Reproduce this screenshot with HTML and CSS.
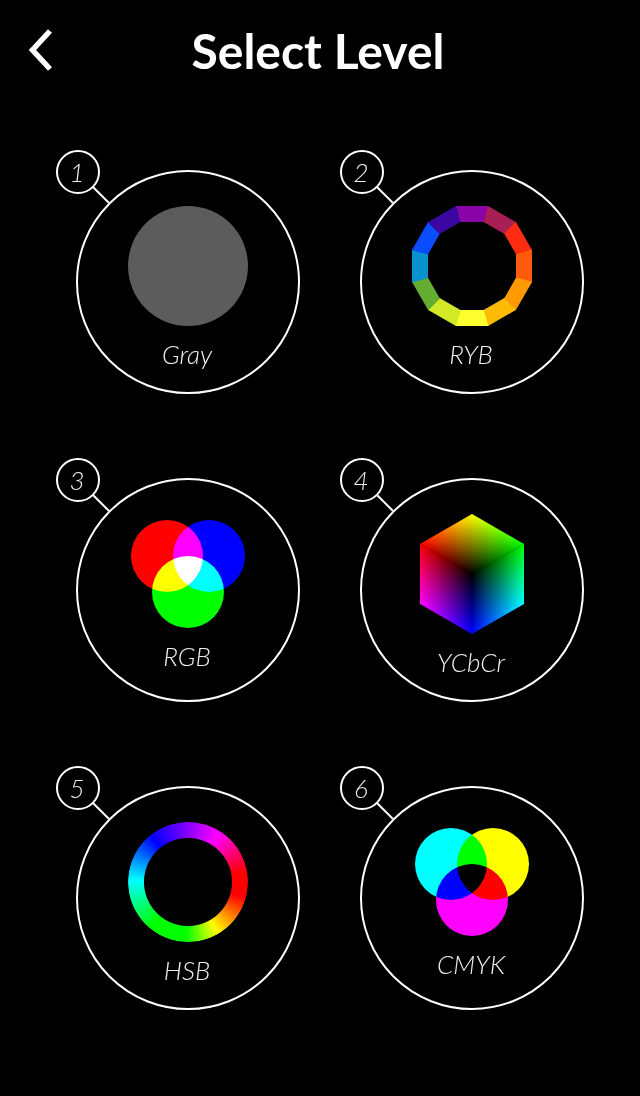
FILE: index.html
```html
<!DOCTYPE html>
<html lang="en">
<head>
<meta charset="utf-8">
<title>Select Level</title>
<link rel="stylesheet" href="styles.css">
</head>
<body>
<header class="header">
  <svg class="back" viewBox="0 0 32 44" aria-hidden="true"><polyline points="26,3 8.5,22 26,41"/></svg>
  <h1 class="title">Select Level</h1>
</header>
<main class="levels">
  <section class="level">
    <span class="badge">1</span>
    <div class="disc">
      <div class="gray-dot"></div>
      <p class="name">Gray</p>
    </div>
  </section>
  <section class="level">
    <span class="badge">2</span>
    <div class="disc">
      <svg class="icon" viewBox="-60 -60 120 120" aria-hidden="true">
        <defs><polygon id="seg" points="-16.4,-60 16.4,-60 12,-44 -12,-44"/></defs>
        <use href="#seg" fill="#8a05a8"/>
        <use href="#seg" fill="#a81f56" transform="rotate(30)"/>
        <use href="#seg" fill="#ff2c12" transform="rotate(60)"/>
        <use href="#seg" fill="#ff5a0a" transform="rotate(90)"/>
        <use href="#seg" fill="#ff9a00" transform="rotate(120)"/>
        <use href="#seg" fill="#fdbb05" transform="rotate(150)"/>
        <use href="#seg" fill="#ffff30" transform="rotate(180)"/>
        <use href="#seg" fill="#d2ea26" transform="rotate(210)"/>
        <use href="#seg" fill="#64ad33" transform="rotate(240)"/>
        <use href="#seg" fill="#0892cf" transform="rotate(270)"/>
        <use href="#seg" fill="#0a4cff" transform="rotate(300)"/>
        <use href="#seg" fill="#3c06a0" transform="rotate(330)"/>
      </svg>
      <p class="name">RYB</p>
    </div>
  </section>
  <section class="level">
    <span class="badge">3</span>
    <div class="disc">
      <svg class="icon-venn venn-add" viewBox="0 0 114 108" aria-hidden="true">
        <circle cx="36" cy="36" r="36" fill="#f00"/>
        <circle cx="78" cy="36" r="36" fill="#00f"/>
        <circle cx="57" cy="72" r="36" fill="#0f0"/>
      </svg>
      <p class="name">RGB</p>
    </div>
  </section>
  <section class="level">
    <span class="badge">4</span>
    <div class="disc">
      <svg class="icon" viewBox="-60 -60 120 120" aria-hidden="true">
        <defs>
          <linearGradient id="tr" gradientUnits="userSpaceOnUse" x1="0" y1="0" x2="-26" y2="-45"><stop offset="0" stop-color="#000"/><stop offset="1" stop-color="#f00"/></linearGradient>
          <linearGradient id="tg" gradientUnits="userSpaceOnUse" x1="0" y1="0" x2="26" y2="-45"><stop offset="0" stop-color="#000"/><stop offset="1" stop-color="#0f0"/></linearGradient>
          <linearGradient id="lr" gradientUnits="userSpaceOnUse" x1="0" y1="0" x2="-52" y2="0"><stop offset="0" stop-color="#000"/><stop offset="1" stop-color="#f00"/></linearGradient>
          <linearGradient id="lb" gradientUnits="userSpaceOnUse" x1="0" y1="0" x2="-26" y2="45"><stop offset="0" stop-color="#000"/><stop offset="1" stop-color="#00f"/></linearGradient>
          <linearGradient id="rg" gradientUnits="userSpaceOnUse" x1="0" y1="0" x2="52" y2="0"><stop offset="0" stop-color="#000"/><stop offset="1" stop-color="#0f0"/></linearGradient>
          <linearGradient id="rb" gradientUnits="userSpaceOnUse" x1="0" y1="0" x2="26" y2="45"><stop offset="0" stop-color="#000"/><stop offset="1" stop-color="#00f"/></linearGradient>
        </defs>
        <g class="cube">
          <polygon points="0,0 -52,-30 0,-60 52,-30" fill="url(#tr)"/>
          <polygon points="0,0 -52,-30 0,-60 52,-30" fill="url(#tg)"/>
          <polygon points="0,0 -52,-30 -52,30 0,60" fill="url(#lr)"/>
          <polygon points="0,0 -52,-30 -52,30 0,60" fill="url(#lb)"/>
          <polygon points="0,0 52,-30 52,30 0,60" fill="url(#rg)"/>
          <polygon points="0,0 52,-30 52,30 0,60" fill="url(#rb)"/>
        </g>
      </svg>
      <p class="name">YCbCr</p>
    </div>
  </section>
  <section class="level">
    <span class="badge">5</span>
    <div class="disc">
      <div class="hue-ring"></div>
      <p class="name">HSB</p>
    </div>
  </section>
  <section class="level">
    <span class="badge">6</span>
    <div class="disc">
      <svg class="icon-venn venn-sub" viewBox="0 0 114 108" aria-hidden="true">
        <circle cx="36" cy="36" r="36" fill="#0ff"/>
        <circle cx="78" cy="36" r="36" fill="#ff0"/>
        <circle cx="57" cy="72" r="36" fill="#f0f"/>
      </svg>
      <p class="name">CMYK</p>
    </div>
  </section>
</main>
</body>
</html>
```
FILE: styles.css
```css
* { box-sizing: border-box; }
html, body { margin: 0; height: 100%; }
body {
  background: #000;
  color: #fff;
  font-family: Lato, "Open Sans", sans-serif;
  overflow: hidden;
}
.header {
  display: grid;
  grid-template-columns: 32px 1fr 36px;
  align-items: center;
  height: 102px;
  padding: 0 24px;
}
.back {
  width: 32px;
  height: 44px;
  margin-top: -2px;
}
.back polyline {
  fill: none;
  stroke: #fff;
  stroke-width: 5.5;
}
.title {
  margin: 0;
  font-size: 48px;
  font-weight: 700;
  line-height: 1;
  text-align: center;
}
.levels {
  display: grid;
  grid-template-columns: 224px 224px;
  grid-auto-rows: 224px;
  column-gap: 60px;
  row-gap: 84px;
  padding: 68px 0 0 76px;
}
.level { position: relative; }
.disc {
  display: flex;
  flex-direction: column;
  align-items: center;
  justify-content: center;
  width: 224px;
  height: 224px;
  padding-top: 10px;
  border: 2px solid #fff;
  border-radius: 50%;
}
.badge {
  position: absolute;
  left: -20px;
  top: -20px;
  display: flex;
  align-items: center;
  justify-content: center;
  width: 44px;
  height: 44px;
  padding-right: 2px;
  border: 2px solid #fff;
  border-radius: 50%;
  color: #eee;
  font-size: 26px;
  font-style: italic;
  font-weight: 300;
}
.badge::after {
  content: "";
  position: absolute;
  left: 32px;
  top: 42px;
  width: 22px;
  height: 2px;
  background: #fff;
  transform: rotate(45deg);
}
.name {
  margin: 14px 0 0;
  padding-right: 2px;
  color: #eee;
  font-size: 26px;
  font-style: italic;
  font-weight: 300;
  line-height: 28px;
}
.icon { display: block; width: 120px; height: 120px; }
.icon-venn { display: block; width: 114px; height: 108px; isolation: isolate; }
.venn-add circle { mix-blend-mode: screen; }
.venn-sub circle { mix-blend-mode: multiply; }
.cube polygon { mix-blend-mode: screen; }
.cube { isolation: isolate; }
.gray-dot {
  width: 120px;
  height: 120px;
  border-radius: 50%;
  background: #5c5c5c;
}
.hue-ring {
  width: 120px;
  height: 120px;
  border-radius: 50%;
  background: conic-gradient(#8800ff 0deg, #f0f 32deg, #f00 80deg, #f00 105deg, #ff0 150deg, #0f0 182deg, #0f0 219deg, #0ff 272deg, #00f 321deg, #8800ff 360deg);
  -webkit-mask: radial-gradient(circle, transparent 43.5px, #000 44.5px);
  mask: radial-gradient(circle, transparent 43.5px, #000 44.5px);
}
```
